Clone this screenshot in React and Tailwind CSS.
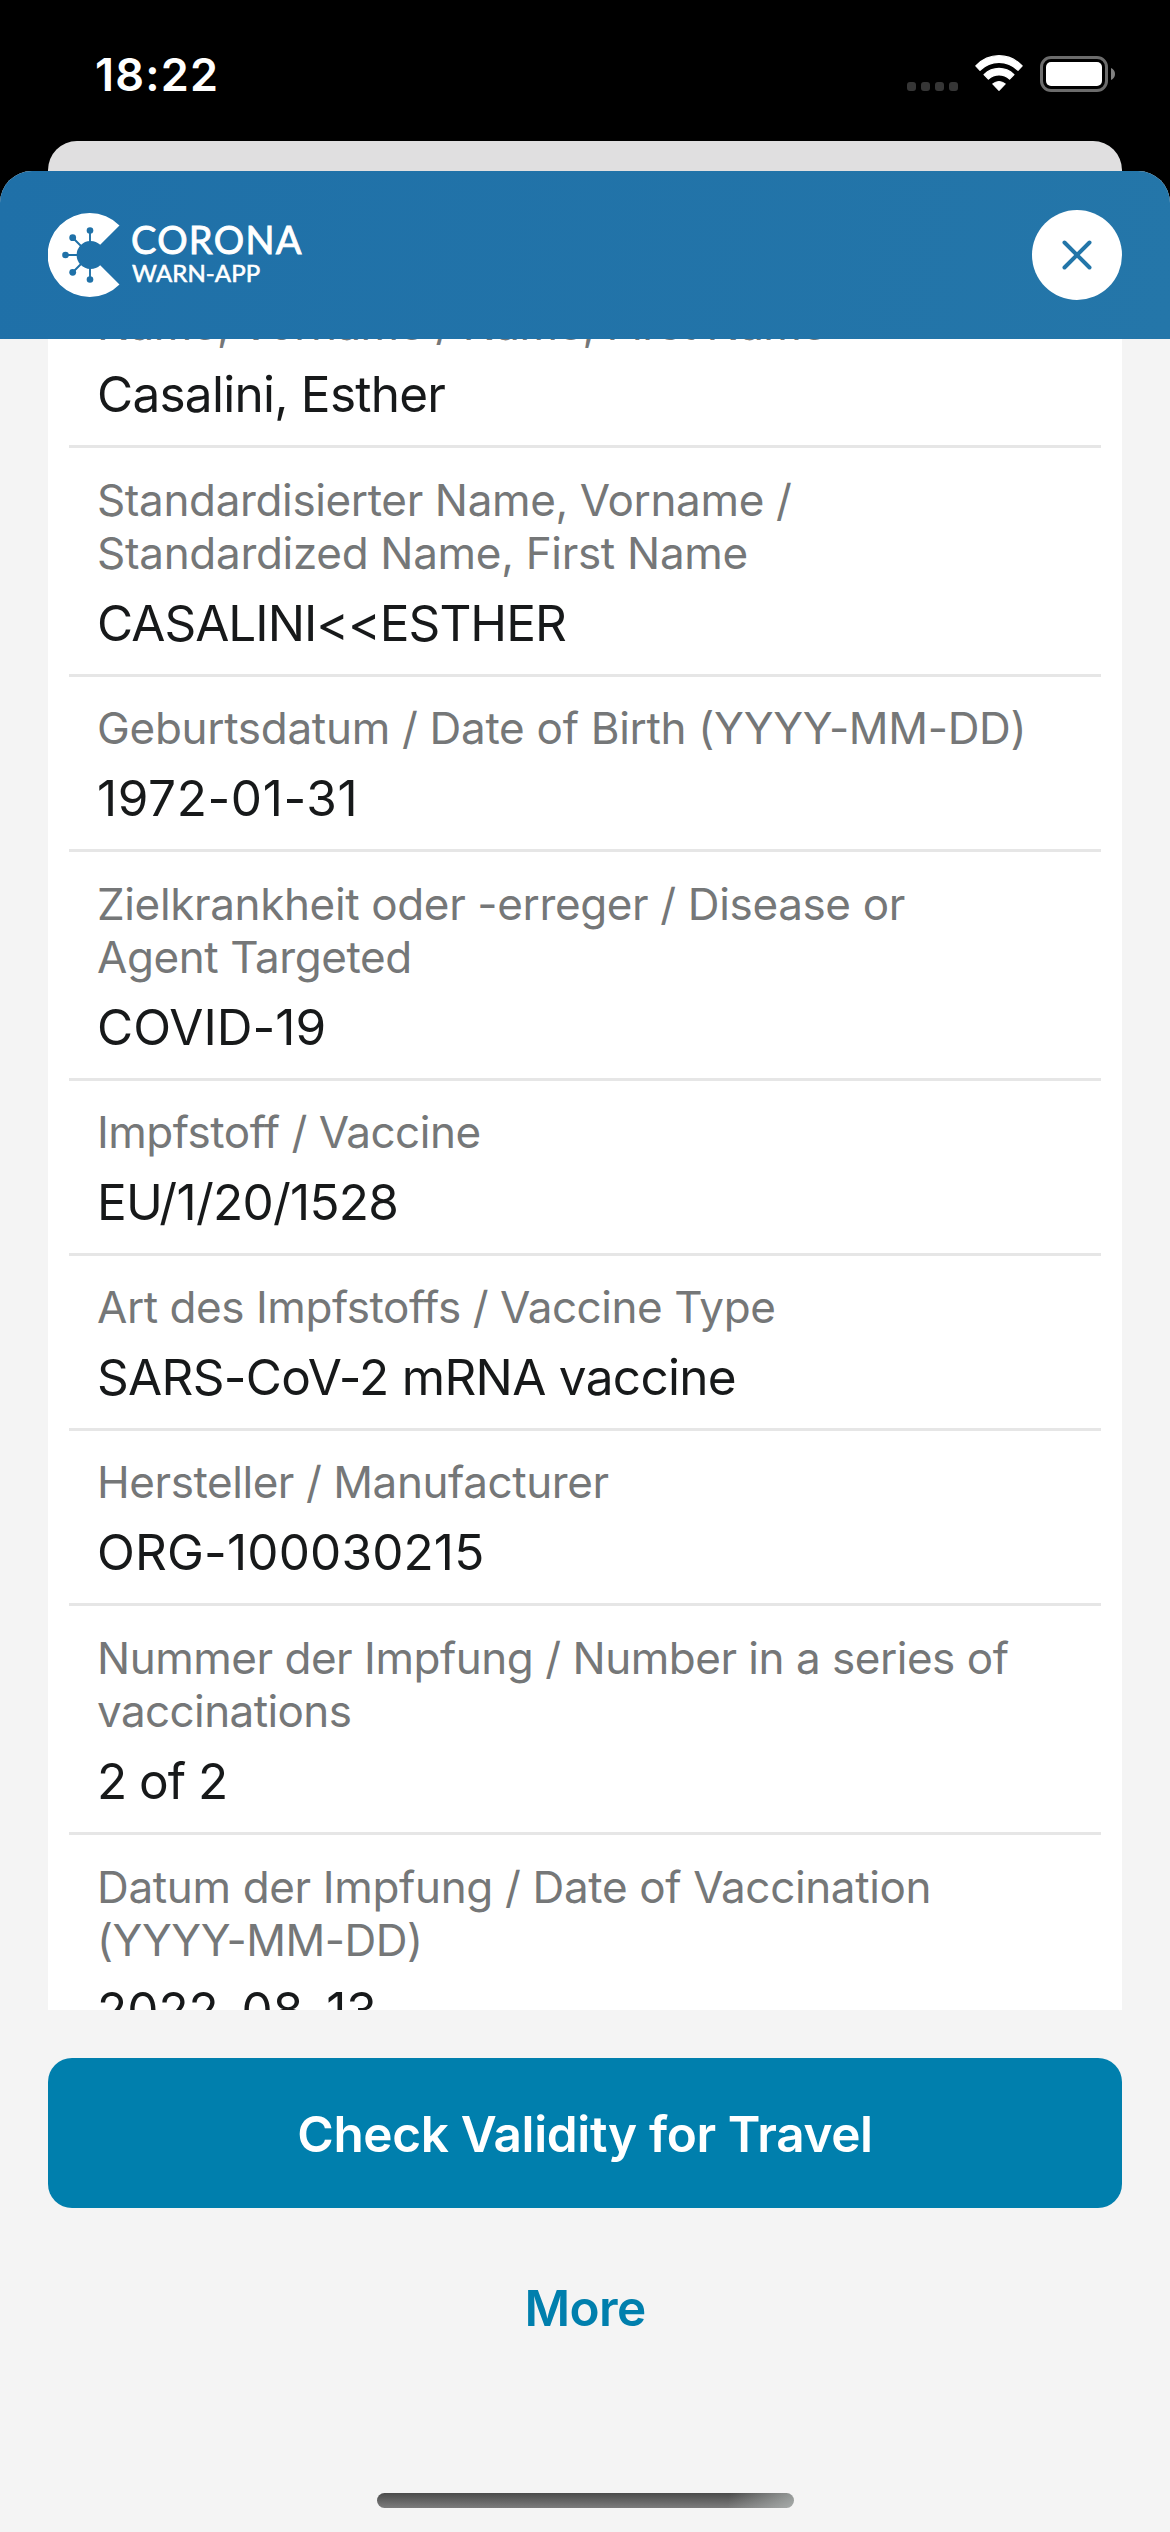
import React from 'react';

const ENTRIES = [
  {
    label: [['Name, Vorname / Name, First Name', 'tracking-[-0.54px]']],
    value: ['Casalini, Esther', 'tracking-[-0.74px]'],
  },
  {
    label: [
      ['Standardisierter Name, Vorname /', 'tracking-[-0.36px]'],
      ['Standardized Name, First Name', 'tracking-[-0.3px]'],
    ],
    value: ['CASALINI<<ESTHER', 'tracking-[-0.98px]'],
  },
  {
    label: [['Geburtsdatum / Date of Birth (YYYY-MM-DD)', 'tracking-[-0.3px]']],
    value: ['1972-01-31', 'tracking-[0.6px]'],
  },
  {
    label: [
      ['Zielkrankheit oder -erreger / Disease or', 'tracking-[-0.36px]'],
      ['Agent Targeted', 'tracking-[-0.42px]'],
    ],
    value: ['COVID-19', 'tracking-[0px]'],
  },
  {
    label: [['Impfstoff / Vaccine', 'tracking-[-0.5px]']],
    value: ['EU/1/20/1528', 'tracking-[-0.72px]'],
  },
  {
    label: [['Art des Impfstoffs / Vaccine Type', 'tracking-[-0.45px]']],
    value: ['SARS-CoV-2 mRNA vaccine', 'tracking-[-0.7px]'],
  },
  {
    label: [['Hersteller / Manufacturer', 'tracking-[-0.43px]']],
    value: ['ORG-100030215', 'tracking-[0.15px]'],
  },
  {
    label: [
      ['Nummer der Impfung / Number in a series of', 'tracking-[-0.48px]'],
      ['vaccinations', 'tracking-[-0.6px]'],
    ],
    value: ['2 of 2', 'tracking-[-1px]'],
  },
  {
    label: [
      ['Datum der Impfung / Date of Vaccination', 'tracking-[-0.35px]'],
      ['(YYYY-MM-DD)', 'tracking-[-0.5px]'],
    ],
    value: ['2022-08-13', 'tracking-[0px]'],
  },
];

function StatusBar() {
  return (
    <div className="flex h-[141px] shrink-0 items-start justify-between pl-[95px] pr-[55px]">
      <div className="mt-[48px] text-[45px] leading-[54px] font-semibold tracking-[1.2px] text-white">18:22</div>
      <div className="mt-[55px] flex items-start">
        <div className="mt-[27px] mr-[17px] flex gap-[5px]">
          <span className="size-[9px] rounded-[3px] bg-[#363636]" />
          <span className="size-[9px] rounded-[3px] bg-[#363636]" />
          <span className="size-[9px] rounded-[3px] bg-[#363636]" />
          <span className="size-[9px] rounded-[3px] bg-[#363636]" />
        </div>
        <svg className="mr-[17px] h-[37px] w-[48px]" viewBox="0 0 48 37" fill="#fff" stroke="#fff" strokeWidth="1.2" strokeLinejoin="round">
          <path d="M.8 10.8C7.2 4.4 15.3.7 24 .7s16.800 3.700 23.200 10.100L43 15.300C37.800 10.200 31.100 7.400 24 7.400S10.200 10.200 5 15.300Z" />
          <path d="M9 19.600c4.200-4 9.400-6.200 15-6.200s10.800 2.200 15 6.200l-4.400 4.500c-3-2.800-6.600-4.200-10.600-4.200s-7.600 1.400-10.600 4.200Z" />
          <path d="M17.800 28.900c1.800-1.500 3.900-2.400 6.200-2.400s4.400.9 6.200 2.400L24 35.300Z" />
        </svg>
        <svg className="mt-px h-[36px] w-[75px]" viewBox="0 0 75 36">
          <rect x="1.500" y="1.500" width="65" height="33" rx="9.500" fill="none" stroke="#6c6c6c" strokeWidth="3" />
          <rect x="6" y="6" width="56" height="24" rx="5" fill="#fff" />
          <path d="M71 12c2.600 1 4 3.400 4 6s-1.400 5-4 6Z" fill="#808080" />
        </svg>
      </div>
    </div>
  );
}

function Logo() {
  return (
    <div className="flex items-start gap-[12px] text-white">
      <svg className="h-[84px] w-[72px]" viewBox="0 0 72 84">
        <path d="M71.500 12.500A42 42 0 1 0 71.500 71.500L52.200 52.200A14 14 0 1 1 52.200 31.800Z" fill="#fff" />
        <g stroke="#1f71a8" strokeWidth="1.900">
          <path d="M42 30V17.500M33 33L24.500 24.500M29 42H15.500M33 51L24.500 59.500M42 54V66.500" />
        </g>
        <g fill="#1f71a8">
          <circle cx="42" cy="17.500" r="3.300" />
          <circle cx="24.700" cy="24.700" r="3.400" />
          <circle cx="17.500" cy="42" r="3.300" />
          <circle cx="24.700" cy="59.300" r="3.400" />
          <circle cx="42" cy="66.500" r="3.300" />
        </g>
      </svg>
      <div className="mt-[7px] font-['Lato',sans-serif] font-normal whitespace-nowrap">
        <div className="-ml-px text-[38px] leading-[38px] tracking-[1.3px] [-webkit-text-stroke:0.9px_white]">CORONA</div>
        <div className="mt-[3px] text-[24px] leading-[24px] tracking-[0.1px] [-webkit-text-stroke:0.6px_white]">WARN-APP</div>
      </div>
    </div>
  );
}

function Header() {
  return (
    <header className="flex h-[168px] shrink-0 items-start justify-between bg-[linear-gradient(100deg,#1f70a8,#2476a9)] px-[48px]">
      <div className="mt-[42px]">
        <Logo />
      </div>
      <button aria-label="Close" className="mt-[39px] flex size-[90px] items-center justify-center rounded-full bg-white">
        <svg className="size-[30px]" viewBox="0 0 30 30" stroke="#2376a9" strokeWidth="4" strokeLinecap="round">
          <path d="M2.500 2.500L27.500 27.500M27.500 2.500L2.500 27.500" />
        </svg>
      </button>
    </header>
  );
}

function Entry({ label, value }) {
  return (
    <div className="border-b-[3px] border-[#e6e6e6] px-[28px] pb-[21px]">
      <div className={label.length > 1 ? 'pt-[26px]' : 'pt-[25px]'}>
        {label.map(([text, tracking]) => (
          <div key={text} className={'text-[44px] leading-[53px] whitespace-nowrap text-[#757778] ' + tracking}>
            {text}
          </div>
        ))}
      </div>
      <div className={'mt-[13px] text-[49.5px] leading-[60px] whitespace-nowrap text-[#17191a] ' + value[1]}>{value[0]}</div>
    </div>
  );
}

export default function App() {
  return (
    <div className="flex h-[2532px] w-[1170px] flex-col overflow-hidden bg-black font-['Inter',sans-serif]">
      <StatusBar />
      <div className="mx-[48px] h-[64px] shrink-0 rounded-t-[29px] bg-[#e0dfe0]" />
      <div className="-mt-[34px] flex flex-1 flex-col overflow-hidden rounded-t-[32px] bg-[#f4f4f4]">
        <Header />
        <main className="mx-[48px] h-[1671px] shrink-0 overflow-hidden bg-white px-[21px] [font-feature-settings:'calt'_0]">
          <div className="-mt-[66px]">
            {ENTRIES.map((e) => (
              <Entry key={e.value[0]} label={e.label} value={e.value} />
            ))}
          </div>
        </main>
        <footer className="flex flex-col items-center px-[48px] pt-[48px]">
          <button className="h-[150px] w-full rounded-[24px] bg-[#007fad] pt-[2px] text-[49.5px] leading-[148px] font-semibold tracking-[-0.36px] text-white">
            Check Validity for Travel
          </button>
          <button className="mt-[70px] text-[49.5px] leading-[60px] font-semibold tracking-[-0.65px] text-[#007fad]">More</button>
          <div className="mt-[155px] h-[15px] w-[417px] rounded-full bg-[linear-gradient(100deg,transparent_84%,rgba(190,196,194,0.65)),linear-gradient(#4b4b4b,#7c7c7c)]" />
        </footer>
      </div>
    </div>
  );
}
